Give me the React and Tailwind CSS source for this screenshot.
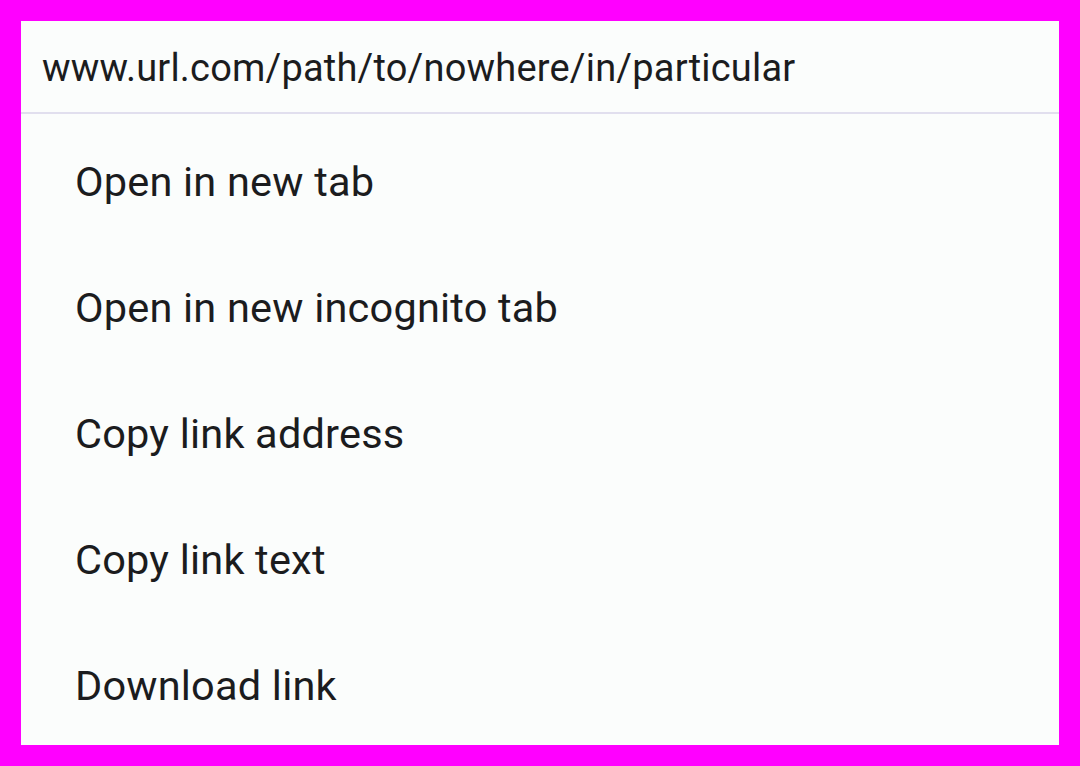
import React from 'react';

const items = [
  'Open in new tab',
  'Open in new incognito tab',
  'Copy link address',
  'Copy link text',
  'Download link',
];

export default function App() {
  return (
    <div className="w-[1080px] h-[766px] bg-[#ff00ff] p-[21px]" style={{ fontFamily: 'Roboto, sans-serif' }}>
      <div className="w-full h-full bg-[#fbfdfc] flex flex-col">
        {/* Link header */}
        <div className="h-[93px] flex items-center pl-[21px] border-b-2 border-[#e1dfee] text-[#1b1c1e]">
          <span className="text-[38px] leading-none tracking-[0.2px] pt-[2px]">www.url.com/path/to/nowhere/in/particular</span>
        </div>

        {/* Menu items */}
        {items.map((label) => (
          <div key={label} className="h-[126px] flex items-center pl-[54px] text-[#1b1c1e]">
            <span className="text-[41.5px] leading-none tracking-[0.2px] pt-[10px]">{label}</span>
          </div>
        ))}
      </div>
    </div>
  );
}
